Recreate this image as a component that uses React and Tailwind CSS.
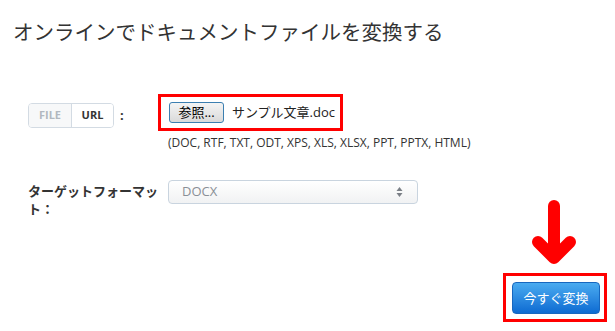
// App.jsx — online document converter form

export default function App() {
  return (
    <div className="relative w-[615px] h-[331px] overflow-hidden bg-white text-[#333]"
         style={{ fontFamily: '"Open Sans", "Noto Sans CJK JP", sans-serif' }}>

      {/* Title */}
      <h1 className="pl-[13px] pt-[15px] text-[20.5px] leading-[32px] font-normal text-[#333]"
          style={{ fontFamily: '"Noto Sans CJK JP", sans-serif' }}>
        オンラインでドキュメントファイルを変換する
      </h1>

      {/* Source row */}
      <div className="flex mt-[47px] pl-[28px]">
        <div className="w-[130px] flex items-start pt-[9px]">
          <div className="flex h-[25px] rounded-[4px] border border-[#d3dbe3] overflow-hidden text-[11px] font-bold">
            <span className="w-[43px] flex items-center justify-center bg-[#f7f8f9] text-[#b2b8c0] border-r border-[#d3dbe3]">FILE</span>
            <span className="w-[41px] flex items-center justify-center bg-white text-[#333]">URL</span>
          </div>
          <span className="ml-[6px] mt-[3px] text-[13px] font-bold">:</span>
        </div>
        <div className="flex flex-col">
          <div className="flex items-center w-[185px] h-[37px] border-[3px] border-[#f00] pl-[8px]">
            <button className="w-[55px] h-[21px] rounded-[3px] border border-[#3c7fb1] bg-gradient-to-b from-[#f4f4f4] to-[#dadada] text-[13px] leading-none text-black">
              参照...
            </button>
            <span className="ml-[8px] text-[13px] text-[#222]">サンプル文章.doc</span>
          </div>
          <p className="ml-[10px] mt-[4px] text-[12px] leading-[16px] text-[#333]">
            (DOC, RTF, TXT, ODT, XPS, XLS, XLSX, PPT, PPTX, HTML)
          </p>
        </div>
      </div>

      {/* Target format row */}
      <div className="flex items-start mt-[29px] pl-[28px]">
        <label className="w-[132px] mt-[2px] text-[13px] leading-[18px] font-bold text-[#333]">
          ターゲットフォーマット：
        </label>
        <div className="ml-[8px] w-[250px] h-[24px] flex items-center justify-between rounded-[4px] border border-[#c9d4df] bg-gradient-to-b from-white to-[#f1f2f3] pl-[13px] pr-[14px]">
          <span className="text-[13px] text-[#8a8f96]">DOCX</span>
          <svg width="7" height="12" viewBox="0 0 7 12">
            <path d="M3.5 1 L6.5 5 H0.5 Z" fill="#7a7f86" />
            <path d="M3.5 11 L6.5 7 H0.5 Z" fill="#7a7f86" />
          </svg>
        </div>
      </div>

      {/* Submit */}
      <div className="flex justify-end mt-[55px] pr-[8px]">
        <div className="w-[104px] h-[49px] border-[3px] border-[#f00] flex items-center pl-[6px]">
          <button className="w-[88px] h-[32px] rounded-[4px] border border-[#1767bf] bg-gradient-to-b from-[#4aabf0] to-[#0c6bd2] text-white text-[13px]"
                  style={{ fontFamily: '"Noto Sans CJK JP", sans-serif' }}>
            今すぐ変換
          </button>
        </div>
      </div>

      {/* Annotation arrow */}
      <svg className="absolute left-[530px] top-[196px]" width="50" height="72" viewBox="0 0 50 72">
        <g stroke="#f00" strokeWidth="12" strokeLinecap="round" strokeLinejoin="round" fill="none">
          <path d="M24 10 V60" />
          <path d="M8 46 L24 62 L40 46" />
        </g>
      </svg>
    </div>
  )
}
